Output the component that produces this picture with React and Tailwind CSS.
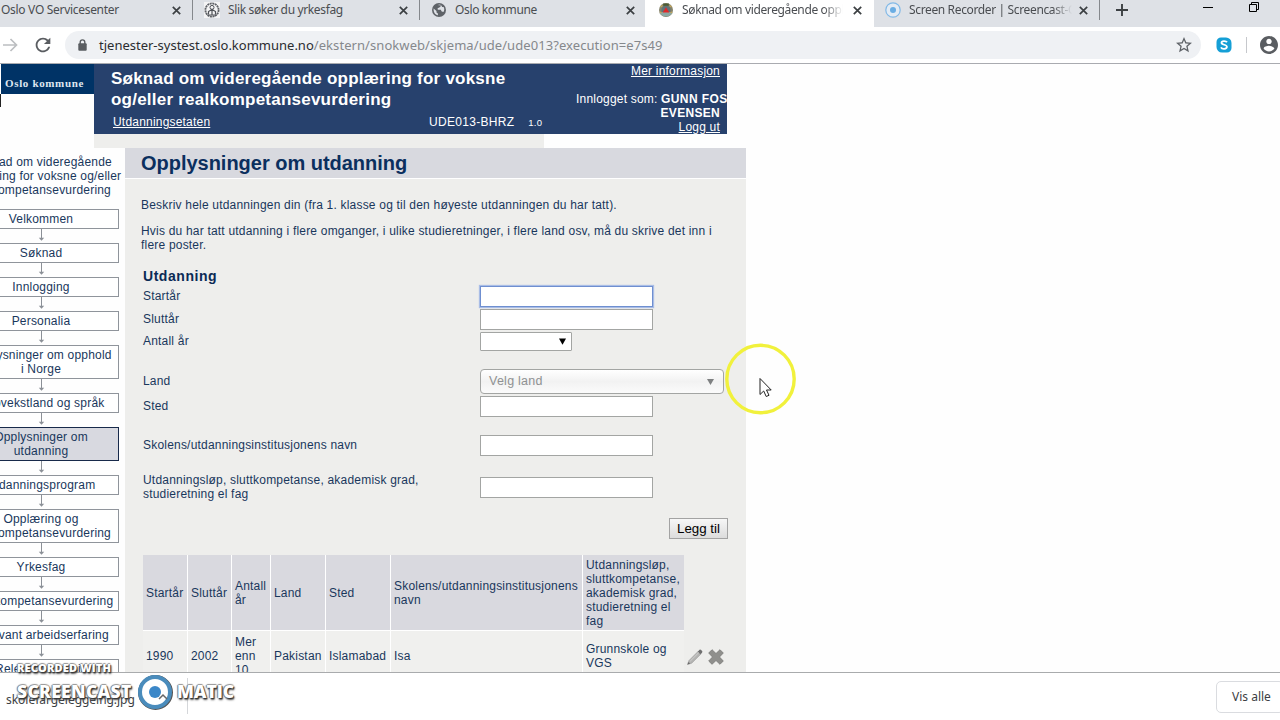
import React from "react";

function Close({ className = "" }) {
  return (
    <svg className={`h-[9px] w-[9px] shrink-0 ${className}`} viewBox="0 0 9 9" stroke="#3c4043" strokeWidth="1.7">
      <path d="M.8 .8 8.2 8.2M8.2 .8 .8 8.2" />
    </svg>
  );
}

function CrestIcon() {
  return (
    <svg className="h-4 w-4 shrink-0" viewBox="0 0 16 16">
      <rect width="16" height="16" fill="#f4f4f5" />
      <circle cx="8" cy="8" r="6.6" fill="none" stroke="#606368" strokeWidth="1.8" strokeDasharray="2 .6" />
      <circle cx="8" cy="5.4" r="2" fill="none" stroke="#505358" />
      <path d="M4.5 12V9.5L8 7.5l3.5 2V12M8 7v6M3.5 13h9" fill="none" stroke="#505358" strokeWidth="1.2" />
    </svg>
  );
}

function GlobeIcon() {
  return (
    <svg className="h-[14px] w-[14px] shrink-0" viewBox="0 0 14 14">
      <circle cx="7" cy="7" r="7" fill="#5f6368" />
      <path d="M1.6 5.6 4.5 8v1.6l1.4 1v1.7C3.200 12 1.400 9.700 1.600 5.600ZM5.500 2l2.700-.4.6 1.600L7.300 4.500 5.600 5.300l.2 1.500h3l.9 1.700 1.700.5c1-1.400 1.200-3.500.2-5.100l-1.500.2-.6-1.500" fill="#dee1e6" />
    </svg>
  );
}

function SealIcon() {
  return (
    <svg className="h-4 w-4 shrink-0" viewBox="0 0 16 16">
      <circle cx="8" cy="8" r="7" fill="#85836c" />
      <circle cx="8" cy="8" r="4.600" fill="#5e7479" />
      <path d="M1.500 11.500Q8 17.500 14.500 11.500L12 10H4Z" fill="#8ba9a4" />
      <path d="M5.200 1.500h5.600v2.300H5.200Z" fill="#4c5a33" />
      <path d="M8 5.200 11.400 10.500H4.600Z" fill="#e02a2a" />
      <path d="M2.500 5 4.500 3.500M13.500 5l-2-1.500M2 10l1.500 1M14 10l-1.500 1" stroke="#c7a85b" strokeWidth="1.300" />
    </svg>
  );
}

function TabBar() {
  return (
    <div className="flex h-[27px] bg-[#dee1e6] text-[12px] leading-[20px] tracking-[-0.36px] text-[#4a4d51]">
      <div className="flex h-5 w-[193px] items-center justify-between border-r border-[#85888c] pr-[11px] pl-px">
        <span className="tracking-[-0.3px]">Oslo VO Servicesenter</span>
        <Close />
      </div>
      <div className="flex h-5 w-[227px] items-center border-r border-[#85888c] pl-[11px] pr-[11px]">
        <CrestIcon />
        <span className="ml-2 flex-1">Slik søker du yrkesfag</span>
        <Close />
      </div>
      <div className="flex h-5 w-[225px] items-center pl-[12px] pr-[10px]">
        <GlobeIcon />
        <span className="ml-[9px] flex-1">Oslo kommune</span>
        <Close />
      </div>
      <div className="flex h-[27px] w-[229px] items-start bg-white pl-[13px] pr-[12px]">
        <div className="flex h-5 w-full items-center">
          <SealIcon />
          <span className="ml-2 w-[161px] overflow-hidden whitespace-nowrap [mask-image:linear-gradient(to_right,black_88%,transparent)]">Søknad om videregående opplæring</span>
          <Close className="ml-auto" />
        </div>
      </div>
      <div className="flex h-[27px] flex-1 rounded-bl-[6px] bg-[#dee1e6]">
        <div className="flex h-5 w-[226px] items-center border-r border-[#85888c] pl-[11px] pr-[11px]">
          <svg className="h-4 w-4 shrink-0" viewBox="0 0 16 16">
            <circle cx="8" cy="8" r="7.200" fill="#e3ebf4" stroke="#82b9e6" strokeWidth="1.200" />
            <circle cx="8" cy="8" r="3" fill="#6aade3" />
          </svg>
          <span className="ml-2 w-[163px] overflow-hidden whitespace-nowrap [mask-image:linear-gradient(to_right,black_88%,transparent)]">Screen Recorder | Screencast-O-Matic</span>
          <Close className="ml-auto" />
        </div>
        <svg className="ml-4 mt-1 h-3 w-3" viewBox="0 0 12 12" stroke="#3c4043" strokeWidth="1.900">
          <path d="M6 0v12M0 6h12" />
        </svg>
        <div className="ml-[75px] mt-[7px] h-px w-[10px] bg-black" />
        <svg className="ml-[36px] mt-[2px] h-[10px] w-[10px]" viewBox="0 0 10 10" fill="none" stroke="#000">
          <path d="M.5 2.500h7v7h-7zM2.500 2.500v-2h7v7h-2" />
        </svg>
      </div>
    </div>
  );
}

function AddressBar() {
  return (
    <div className="flex h-[37px] items-center border-b border-[#a9abb0] bg-white">
      <svg className="ml-[3px] h-[14px] w-[15px]" viewBox="0 0 15 14" fill="none" stroke="#bcbec1" strokeWidth="1.700">
        <path d="M0 7h13.500M7.500 1l6 6-6 6" />
      </svg>
      <svg className="ml-[14px] h-[22px] w-[22px]" viewBox="0 0 24 24" fill="#5a5d61">
        <path d="M17.650 6.350C16.200 4.900 14.210 4 12 4c-4.420 0-7.990 3.580-7.990 8s3.570 8 7.990 8c3.730 0 6.840-2.550 7.730-6h-2.080c-.82 2.330-3.040 4-5.650 4-3.310 0-6-2.690-6-6s2.690-6 6-6c1.660 0 3.140.69 4.220 1.780L13 11h7V4l-2.350 2.350z" />
      </svg>
      <div className="ml-[11px] flex h-7 w-[1136px] items-center rounded-full bg-[#eff1f4] pl-[13px] pr-[9px]">
        <svg className="h-[12px] w-[9px]" viewBox="0 0 9 12">
          <path d="M2.200 5V3.200a2.300 2.300 0 0 1 4.600 0V5" fill="none" stroke="#5a5d61" strokeWidth="1.400" />
          <rect x=".3" y="4.300" width="8.400" height="7.500" rx="1" fill="#5a5d61" />
        </svg>
        <span className="ml-[12px] text-[13px] leading-[20px] tracking-[0.07px] whitespace-nowrap text-[#85888c]">
          <span className="tracking-normal text-[#2a2c30]">tjenester-systest.oslo.kommune.no</span>/ekstern/snokweb/skjema/ude/ude013?execution=e7s49
        </span>
        <svg className="ml-auto h-[16px] w-[16px]" viewBox="2 2 20 20" fill="#5f6368">
          <path d="M22 9.240l-7.190-.62L12 2 9.190 8.630 2 9.240l5.460 4.730L5.820 21 12 17.270 18.180 21l-1.630-7.030L22 9.240zM12 15.400l-3.760 2.270 1-4.280-3.320-2.880 4.380-.38L12 6.100l1.710 4.040 4.380.38-3.320 2.880 1 4.280L12 15.400z" />
        </svg>
      </div>
      <svg className="ml-[15px] h-[16px] w-[16px]" viewBox="0 0 16 16">
        <path d="M5 .5h5A5.500 5.500 0 0 1 15.500 6v5a4.500 4.500 0 0 1-4.500 4.500H6A5.500 5.500 0 0 1 .5 10V5A4.500 4.500 0 0 1 5 .5Z" fill="#159fd6" />
        <path d="M11 5.200C10 3.600 5.500 3.500 5.500 5.800c0 2.400 5.400 1.500 5.400 4 0 2.600-4.900 2.700-6 .6" fill="none" stroke="#fff" strokeWidth="1.800" />
      </svg>
      <div className="ml-[14px] h-4 w-px bg-[#c6c8cc]" />
      <svg className="ml-[13px] h-[18px] w-[18px] shrink-0" viewBox="2 2 20 20" fill="#5a5d61">
        <path d="M12 2C6.480 2 2 6.480 2 12s4.480 10 10 10 10-4.480 10-10S17.520 2 12 2zm0 3c1.660 0 3 1.340 3 3s-1.340 3-3 3-3-1.340-3-3 1.340-3 3-3zm0 14.200c-2.500 0-4.710-1.280-6-3.220.03-1.990 4-3.080 6-3.080 1.990 0 5.970 1.090 6 3.080-1.290 1.940-3.500 3.220-6 3.220z" />
      </svg>
    </div>
  );
}

function SiteHeader() {
  return (
    <div className="flex h-[70px] w-[727px] shrink-0">
      <div className="w-[94px]">
        <div className="flex h-[30px] items-center border-l border-white bg-[#003366] pl-[4px] pt-[9px] font-['Liberation_Serif',serif] text-[11px] font-bold tracking-[0.65px] whitespace-nowrap text-[#dfe7ef]">Oslo kommune</div>
        <div className="h-[13px] w-px bg-[#222]" />
      </div>
      <div className="flex w-[633px] justify-between overflow-hidden bg-[#27416d] text-white">
        <div className="pl-[17px] pt-[4px]">
          <div className="text-[17px] leading-[21px] font-bold tracking-[0.23px] whitespace-nowrap">
            Søknad om videregående opplæring for voksne
            <br />
            og/eller realkompetansevurdering
          </div>
          <div className="mt-[5px] flex items-baseline pl-[2px] leading-[14px]">
            <span className="w-[316px]"><span className="underline underline-offset-1">Utdanningsetaten</span></span>
            <span className="tracking-[0.3px]">UDE013-BHRZ</span>
            <span className="ml-[14px] text-[9.5px] leading-none">1.0</span>
          </div>
        </div>
        <div className="w-[151px] pr-[7px] text-right leading-[14px] whitespace-nowrap">
          <div className="underline underline-offset-1">Mer informasjon</div>
          <div className="mt-[14px] -mr-[7px] text-left">Innlogget som: <b className="tracking-[0.4px]">GUNN FOSS</b></div>
          <div className="font-bold tracking-[0.3px]">EVENSEN</div>
          <div className="underline underline-offset-1">Logg ut</div>
        </div>
      </div>
    </div>
  );
}

const steps = [
  ["Velkommen"],
  ["Søknad"],
  ["Innlogging"],
  ["Personalia"],
  ["Opplysninger om opphold", "i Norge"],
  ["Oppvekstland og språk"],
  ["Opplysninger om", "utdanning"],
  ["Utdanningsprogram"],
  ["Opplæring og", "realkompetansevurdering"],
  ["Yrkesfag"],
  ["Realkompetansevurdering"],
  ["Relevant arbeidserfaring"],
  ["Relevant praksis"],
];

function Steps() {
  return (
    <nav className="-ml-[37px] flex w-[156px] shrink-0 flex-col pt-[7px] leading-[14px]">
      <div className="mb-[12px] flex flex-col items-center whitespace-nowrap">
        <span>Søknad om videregående</span>
        <span>opplæring for voksne og/eller</span>
        <span>realkompetansevurdering</span>
      </div>
      {steps.map((lines, i) => (
        <React.Fragment key={i}>
          {i > 0 && (
            <svg className="h-[14px] w-[7px] shrink-0 self-center" viewBox="0 0 7 14">
              <path d="M3.500 0v11" stroke="#8b9097" />
              <path d="M.8 8.800h5.400L3.500 11.800Z" fill="#8b9097" />
            </svg>
          )}
          <div
            className={
              "flex shrink-0 flex-col items-center border py-[2px] whitespace-nowrap " +
              (i === 6 ? "border-[#17294a] bg-[#d8d9e0]" : "border-[#8f949b] bg-white")
            }
          >
            {lines.map((l) => (
              <span key={l}>{l}</span>
            ))}
          </div>
        </React.Fragment>
      ))}
    </nav>
  );
}

function Field({ label, className, children }) {
  return (
    <div className={`flex items-center ${className}`}>
      <div className="w-[337px] pb-[2px] leading-[14px]">{label}</div>
      {children}
    </div>
  );
}

function TextBox({ focused }) {
  return (
    <div
      className={
        "h-[21px] w-[173px] border bg-white " +
        (focused ? "border-[#6f8fd0] shadow-[0_0_1px_1px_#a9bde6]" : "border-[#a3a5a3]")
      }
    />
  );
}

const head = ["Startår", "Sluttår", "Antall år", "Land", "Sted", "Skolens/utdanningsinstitusjonens navn", "Utdanningsløp, sluttkompetanse, akademisk grad, studieretning el fag"];
const row = ["1990", "2002", "Mer enn 10", "Pakistan", "Islamabad", "Isa", "Grunnskole og VGS"];

function EducationTable() {
  return (
    <div className="flex">
      <div className="grid w-[541px] shrink-0 grid-cols-[44px_43px_38px_54px_64px_191px_101px] grid-rows-[75px_50px] gap-px bg-white leading-[14px]">
        {head.map((t) => (
          <div key={t} className="flex items-center bg-[#d9d9df] pl-[3px]">
            <span>{t}</span>
          </div>
        ))}
        {row.map((t) => (
          <div key={t} className="flex items-center bg-[#f0f0ee] pl-[3px]">
            <span>{t}</span>
          </div>
        ))}
      </div>
      <div className="flex gap-[5px] pl-[3px] pt-[94px]">
        <svg className="h-4 w-4" viewBox="0 0 16 16">
          <path d="M.5 15.500 2 11.500 11.500 2l2.700 2.700-9.500 9.500Z" fill="#b4b4b2" stroke="#999" strokeWidth=".6" />
          <path d="m10.800 2.700 1.700-1.900q.8-.6 1.600.1l1 1q.6.8 0 1.600l-1.800 1.800Z" fill="#707070" />
          <path d="M.5 15.500 1.500 13l1.600 1.500Z" fill="#666" />
          <path d="m3.200 12.200 8.600-8.600" stroke="#d0d0d0" />
        </svg>
        <svg className="h-4 w-4" viewBox="0 0 16 16">
          <path d="M4 .7 8 4.500 12 .7 15.300 4 11.500 8l3.800 4L12 15.300 8 11.500 4 15.300.7 12l3.800-4L.7 4Z" fill="#8f8f8c" stroke="#777775" strokeWidth=".8" strokeLinejoin="round" />
        </svg>
      </div>
    </div>
  );
}

function Panel() {
  return (
    <main className="ml-[6px] h-full w-[621px] shrink-0 bg-[#eeeeec]">
      <h1 className="h-[31px] border-b border-white bg-[#d8d9df] pl-4 text-[20px] leading-[30px] font-bold tracking-[-0.02px] text-[#0b2f5e]">Opplysninger om utdanning</h1>
      <div className="pl-4 pt-[19px] leading-[14px] whitespace-nowrap">
        <p>Beskriv hele utdanningen din (fra 1. klasse og til den høyeste utdanningen du har tatt).</p>
        <p className="mt-[12px]">
          Hvis du har tatt utdanning i flere omganger, i ulike studieretninger, i flere land osv, må du skrive det inn i
          <br />
          flere poster.
        </p>
      </div>
      <div className="pl-[18px]">
        <h2 className="mt-[16px] text-[14px] leading-[17px] font-bold tracking-[0.55px] text-[#0b2a55]">Utdanning</h2>
        <Field label="Startår" className="h-[23px]"><TextBox focused /></Field>
        <Field label="Sluttår" className="h-[23px]"><TextBox /></Field>
        <Field label="Antall år" className="h-[21px]">
          <div className="flex h-[19px] w-[92px] items-center justify-end rounded-[1px] border border-[#a3a5a3] bg-white pr-[5px]">
            <svg className="h-[7px] w-[7px]" viewBox="0 0 7 7"><path d="M0 .5h7L3.500 6.800Z" fill="#000" /></svg>
          </div>
        </Field>
        <Field label="Land" className="mt-[17px] h-[25px]">
          <div className="flex h-[25px] w-[244px] items-center justify-between rounded-[4px] border border-[#a3a5a3] bg-gradient-to-b from-white via-[#f2f2f2] to-[#fbfbfb] pr-[9px] pl-2 text-[#8f9192]">
            <span className="text-[12.5px] tracking-[0.25px]">Velg land</span>
            <svg className="h-[6px] w-[7px]" viewBox="0 0 7 6"><path d="M0 0h7L3.500 6Z" fill="#7e8081" /></svg>
          </div>
        </Field>
        <Field label="Sted" className="mt-px h-[23px]"><TextBox /></Field>
        <Field label="Skolens/utdanningsinstitusjonens navn" className="mt-[16px] h-[23px]"><TextBox /></Field>
        <Field label={<>Utdanningsløp, sluttkompetanse, akademisk grad,<br />studieretning el fag</>} className="mt-[16px] h-[30px]">
          <div className="pb-px"><TextBox /></div>
        </Field>
        <div className="mt-[15px] flex pl-[526px]">
          <div className="flex h-[21px] w-[59px] items-center justify-center border border-[#a3a3a3] bg-gradient-to-b from-[#f7f7f7] to-[#dcdcdc] text-[13.33px] tracking-normal whitespace-nowrap text-black">Legg til</div>
        </div>
        <div className="mt-[16px]"><EducationTable /></div>
      </div>
    </main>
  );
}

function DownloadBar() {
  return (
    <div className="flex h-[48px] items-center justify-between border-t border-[#a9abad] bg-white text-[12px] text-[#3c4043]">
      <div className="mt-[-1px] flex h-[36px] w-[188px] items-center border-r border-[#d5d7da] pl-[6px] pt-[8px]">
        <span className="text-[12px] tracking-[-0.03px]">skolefargeleggeing.jpg</span>
      </div>
      <div className="-mr-1 flex h-8 w-[68px] items-center rounded-[5px] border border-[#dadce0] pl-[15px] whitespace-nowrap">Vis alle</div>
    </div>
  );
}

function Watermark() {
  return (
    <div className="absolute left-[17px] top-[660px] font-['Open_Sans',sans-serif] leading-none font-extrabold whitespace-nowrap text-white [text-shadow:1px_1px_1px_#333,-1px_0_1px_#777,0_-1px_1px_#999,1px_2px_2px_#555]">
      <div className="h-[14px] text-[11px] leading-[16px] tracking-[0.15px]">RECORDED WITH</div>
      <div className="flex items-center text-[17.5px]">
        <span className="w-[120px] tracking-[0.3px]">SCREENCAST</span>
        <svg className="h-[36px] w-[36px]" viewBox="0 0 36 36">
          <circle cx="18.500" cy="18.500" r="15" fill="none" stroke="#555" strokeWidth="5" />
          <circle cx="18" cy="18" r="15" fill="#fff" stroke="#4a8cbc" strokeWidth="4" />
          <circle cx="18" cy="18" r="6" fill="#3b87c8" />
          <path d="m22 25 4-4 4 4" fill="none" stroke="#666" strokeWidth="1.500" />
        </svg>
        <span className="ml-[4px] tracking-[-0.1px]">MATIC</span>
      </div>
    </div>
  );
}

function Pointer() {
  return (
    <div className="absolute left-[724px] top-[342px] h-[74px] w-[74px]">
      <svg className="h-full w-full" viewBox="0 0 74 74">
        <circle cx="36.500" cy="37" r="33.700" fill="none" stroke="#f1f13c" strokeWidth="3.400" />
        <path d="M36 36.500v16l3.700-3.500 2.500 5.500 2.800-1.200-2.500-5.300h4.700Z" fill="#fff" stroke="#222" />
      </svg>
    </div>
  );
}

export default function App() {
  return (
    <div className="relative flex h-[720px] w-[1280px] flex-col overflow-hidden bg-white font-['Noto_Sans',sans-serif]">
      <TabBar />
      <AddressBar />
      <div className="flex h-[608px] flex-col overflow-hidden bg-[#fefefe] font-['Liberation_Sans',Arial,sans-serif] text-[12px] tracking-[0.2px] text-[#19375c]">
        <SiteHeader />
        <div className="ml-[94px] h-[14px] w-[450px] shrink-0 bg-[#eeeeec]" />
        <div className="flex h-[524px] overflow-hidden">
          <Steps />
          <Panel />
        </div>
      </div>
      <DownloadBar />
      <Watermark />
      <Pointer />
    </div>
  );
}
